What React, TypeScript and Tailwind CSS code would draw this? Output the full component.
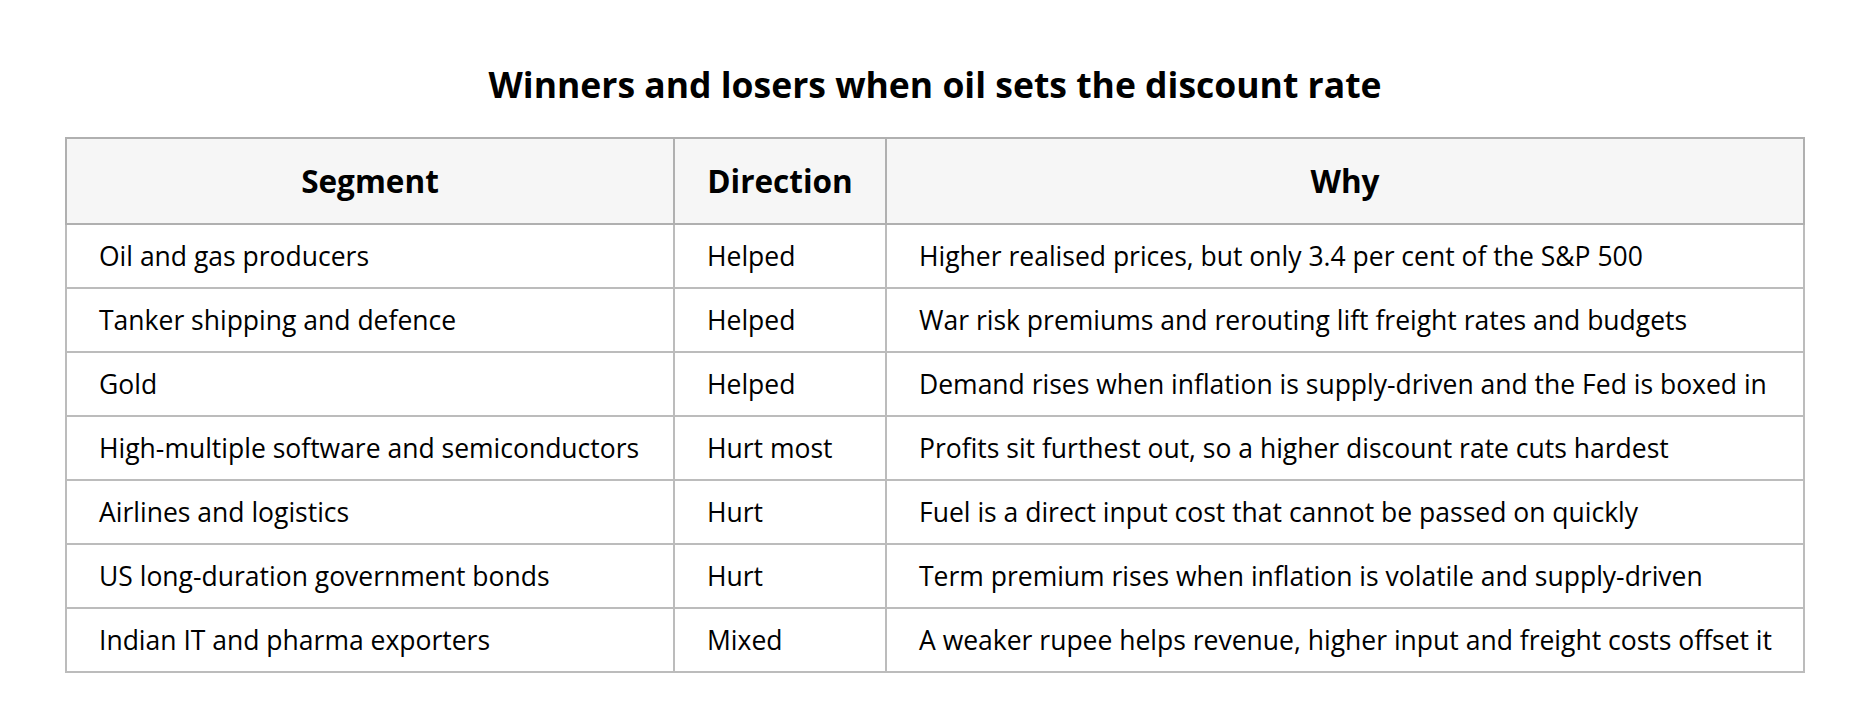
import React from "react";

type Row = { segment: string; direction: string; why: string };

const rows: Row[] = [
  {
    segment: "Oil and gas producers",
    direction: "Helped",
    why: "Higher realised prices, but only 3.4 per cent of the S&P 500",
  },
  {
    segment: "Tanker shipping and defence",
    direction: "Helped",
    why: "War risk premiums and rerouting lift freight rates and budgets",
  },
  {
    segment: "Gold",
    direction: "Helped",
    why: "Demand rises when inflation is supply-driven and the Fed is boxed in",
  },
  {
    segment: "High-multiple software and semiconductors",
    direction: "Hurt most",
    why: "Profits sit furthest out, so a higher discount rate cuts hardest",
  },
  {
    segment: "Airlines and logistics",
    direction: "Hurt",
    why: "Fuel is a direct input cost that cannot be passed on quickly",
  },
  {
    segment: "US long-duration government bonds",
    direction: "Hurt",
    why: "Term premium rises when inflation is volatile and supply-driven",
  },
  {
    segment: "Indian IT and pharma exporters",
    direction: "Mixed",
    why: "A weaker rupee helps revenue, higher input and freight costs offset it",
  },
];

export default function App() {
  return (
    <div className="min-h-[728px] bg-white px-[65px] pt-[62px] font-['Open_Sans',sans-serif] text-black">
      <h2 className="mb-[30px] text-center text-[35.5px] font-bold leading-[45px]">
        Winners and losers when oil sets the discount rate
      </h2>

      <table className="w-full table-fixed border-collapse text-[26.5px]">
        <colgroup>
          <col className="w-[608px]" />
          <col className="w-[212px]" />
          <col />
        </colgroup>
        <thead>
          <tr className="bg-[#f6f6f6]">
            {["Segment", "Direction", "Why"].map((h) => (
              <th
                key={h}
                className="border-2 border-[#b0b0b0] px-[20px] py-[24px] text-center text-[31.5px] font-bold leading-[36px] whitespace-nowrap"
              >
                {h}
              </th>
            ))}
          </tr>
        </thead>
        <tbody>
          {rows.map((r) => (
            <tr key={r.segment}>
              <td className="border-2 border-[#bcbcbc] px-[32px] py-[13px] leading-[36px] whitespace-nowrap">
                {r.segment}
              </td>
              <td className="border-2 border-[#bcbcbc] px-[32px] py-[13px] leading-[36px] whitespace-nowrap">
                {r.direction}
              </td>
              <td className="border-2 border-[#bcbcbc] px-[32px] py-[13px] leading-[36px] whitespace-nowrap">
                {r.why}
              </td>
            </tr>
          ))}
        </tbody>
      </table>
    </div>
  );
}
